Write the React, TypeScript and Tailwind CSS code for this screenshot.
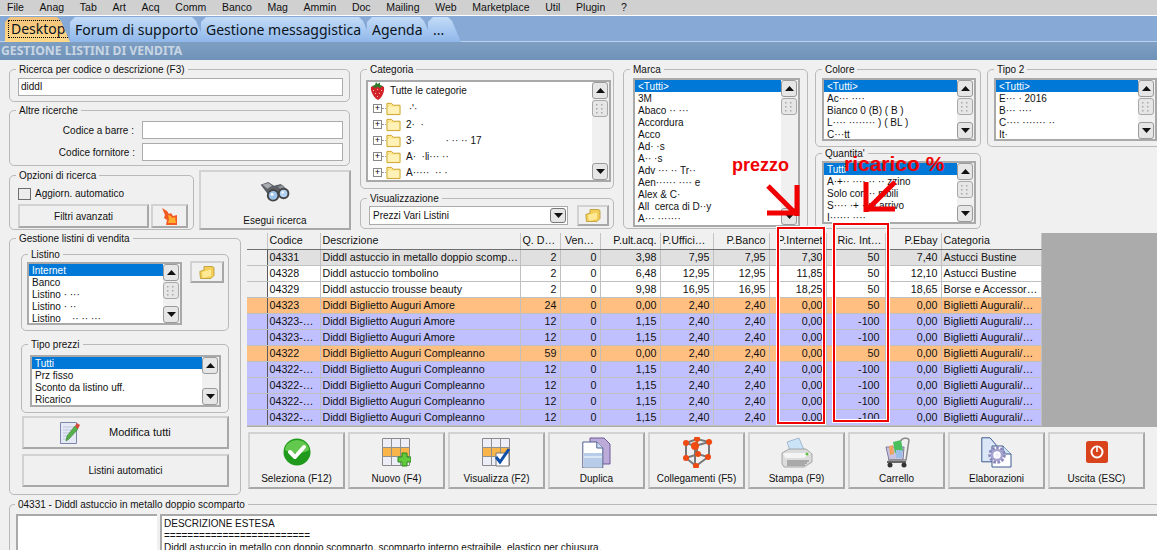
import type { ReactNode } from 'react'

const menuItems = ['File', 'Anag', 'Tab', 'Art', 'Acq', 'Comm', 'Banco', 'Mag', 'Ammin', 'Doc', 'Mailing', 'Web', 'Marketplace', 'Util', 'Plugin', '?']

const columns = [
  { label: '', className: 'w-[20px]' },
  { label: 'Codice', className: 'w-[53px] text-left' },
  { label: 'Descrizione', className: 'w-[200px] text-left' },
  { label: 'Q. D…', className: 'w-[40px] text-left' },
  { label: 'Ven…', className: 'w-[40px] text-center' },
  { label: 'P.ult.acq.', className: 'w-[60px] text-right' },
  { label: 'P.Uffici…', className: 'w-[53px] text-left' },
  { label: 'P.Banco', className: 'w-[56px] text-right' },
  { label: 'P.Internet', className: 'w-[57px] text-right' },
  { label: 'Ric. Int…', className: 'w-[59px] text-right' },
  { label: 'P.Ebay', className: 'w-[56px] text-right' },
  { label: 'Categoria', className: 'w-[100px] text-left' },
]

const rowColors = {
  sel: 'bg-[#e0e0e0]',
  white: 'bg-white',
  orange: 'bg-[#ffbf80]',
  blue: 'bg-[#c0c0ff]',
}

type RowColor = keyof typeof rowColors

const rows: [RowColor, string, string, string, string, string, string, string, string, string, string, string][] = [
  ['sel', '04331', 'Diddl astuccio in metallo doppio scomp…', '2', '0', '3,98', '7,95', '7,95', '7,30', '50', '7,40', 'Astucci Bustine'],
  ['white', '04328', 'Diddl astuccio tombolino', '2', '0', '6,48', '12,95', '12,95', '11,85', '50', '12,10', 'Astucci Bustine'],
  ['white', '04329', 'Diddl astuccio trousse beauty', '2', '0', '9,98', '16,95', '16,95', '18,25', '50', '18,65', 'Borse e Accessor…'],
  ['orange', '04323', 'Diddl Biglietto Auguri Amore', '24', '0', '0,00', '2,40', '2,40', '0,00', '50', '0,00', 'Biglietti Augurali/…'],
  ['blue', '04323-…', 'Diddl Biglietto Auguri Amore', '12', '0', '1,15', '2,40', '2,40', '0,00', '-100', '0,00', 'Biglietti Augurali/…'],
  ['blue', '04323-…', 'Diddl Biglietto Auguri Amore', '12', '0', '1,15', '2,40', '2,40', '0,00', '-100', '0,00', 'Biglietti Augurali/…'],
  ['orange', '04322', 'Diddl Biglietto Auguri Compleanno', '59', '0', '0,00', '2,40', '2,40', '0,00', '50', '0,00', 'Biglietti Augurali/…'],
  ['blue', '04322-…', 'Diddl Biglietto Auguri Compleanno', '12', '0', '1,15', '2,40', '2,40', '0,00', '-100', '0,00', 'Biglietti Augurali/…'],
  ['blue', '04322-…', 'Diddl Biglietto Auguri Compleanno', '12', '0', '1,15', '2,40', '2,40', '0,00', '-100', '0,00', 'Biglietti Augurali/…'],
  ['blue', '04322-…', 'Diddl Biglietto Auguri Compleanno', '12', '0', '1,15', '2,40', '2,40', '0,00', '-100', '0,00', 'Biglietti Augurali/…'],
  ['blue', '04322-…', 'Diddl Biglietto Auguri Compleanno', '12', '0', '1,15', '2,40', '2,40', '0,00', '-100', '0,00', 'Biglietti Augurali/…'],
]

function Group({ label, className, children }: { label: string; className: string; children?: ReactNode }) {
  return (
    <div className={`relative shrink-0 rounded-[5px] border border-[#b9b9b9] ${className}`}>
      <span className="absolute left-[6px] top-[-7px] whitespace-nowrap bg-[#f0f0f0] px-[3px] leading-[13px] text-[#111]">{label}</span>
      {children}
    </div>
  )
}

function RaisedButton({ className, children }: { className: string; children?: ReactNode }) {
  return (
    <div className={`shrink-0 border-2 border-[#d2d2d2] border-r-[#a8a8a8] border-b-[#a8a8a8] bg-[#f0f0f0] ${className}`}>
      {children}
    </div>
  )
}

function ScrollButton({ down }: { down?: boolean }) {
  return (
    <div className="flex h-[17px] w-[16px] shrink-0 items-center justify-center rounded-[3px] border border-[#9a9a9a] bg-[#e6e6e6]">
      <svg width="9" height="5" viewBox="0 0 9 5">
        <path d={down ? 'M0 0h9L4.500 5z' : 'M0 5h9L4.500 0z'} fill="#111" />
      </svg>
    </div>
  )
}

function Thumb() {
  return (
    <div className="mt-px flex h-[17px] w-[16px] items-center justify-center rounded-[3px] border border-[#a8a8a8] bg-[#e6e6e6]">
      <svg width="8" height="11" viewBox="0 0 8 11" fill="#a9a9a9">
        <rect x="0" y="1" width="1.500" height="1.500" />
        <rect x="5" y="1" width="1.500" height="1.500" />
        <rect x="0" y="5" width="1.500" height="1.500" />
        <rect x="5" y="5" width="1.500" height="1.500" />
        <rect x="0" y="9" width="1.500" height="1.500" />
        <rect x="5" y="9" width="1.500" height="1.500" />
      </svg>
    </div>
  )
}

function ScrollBar({ thumb = true }: { thumb?: boolean }) {
  return (
    <div className="flex w-[17px] shrink-0 flex-col bg-[#f0f0f0]">
      <ScrollButton />
      {thumb && <Thumb />}
      <div className="flex-1" />
      <ScrollButton down />
    </div>
  )
}

function ListBox({ items, className, thumb }: { items: string[]; className: string; thumb?: boolean }) {
  return (
    <div className={`flex overflow-hidden border-2 border-[#a9a9a9] bg-white ${className}`}>
      <div className="min-w-0 flex-1 overflow-hidden">
        {items.map((item, i) => (
          <div
            key={i}
            className={`h-[12px] whitespace-pre px-[3px] leading-[13px] ${i === 0 ? 'bg-[#0078d7] text-white' : 'text-[#111]'}`}
          >
            {item}
          </div>
        ))}
      </div>
      <ScrollBar thumb={thumb} />
    </div>
  )
}

function FolderIcon({ size = 14 }: { size?: number }) {
  return (
    <svg width={size} height={size} viewBox="0 0 16 16" className="shrink-0">
      <path d="M1 2.500h5l1.500 2H15v10H1z" fill="#ffe68f" stroke="#c9a227" />
      <path d="M2 6h12v7.500H2z" fill="#fff1b8" />
    </svg>
  )
}

function OpenFolderIcon() {
  return (
    <svg width="16" height="15" viewBox="0 0 16 15">
      <path d="M5 1.500h8l2 1v8l-3 3H1.500L.8 6.500 5 5z" fill="#f3cf5a" stroke="#b8952b" strokeWidth=".8" />
      <path d="M3 7l9-2.500V11l-8 2z" fill="#ffe996" />
    </svg>
  )
}

function Strawberry() {
  return (
    <svg width="15" height="18" viewBox="0 0 15 18" className="shrink-0">
      <path d="M1 5c2-2 11-2 13 0 1 5-3 12-6 13C5 17 0 10 1 5z" fill="#d3232a" />
      <path d="M3 8l1 1M7 7l1 1M11 8l1 1M5 11l1 1M9 11l1 1M7 14l1 1" stroke="#f6b8a8" />
      <path d="M2 4l3-1 1-3 1.500 2L10 .500 10 3l3 1-3 2-2.500-1L5 6z" fill="#2f7a2c" />
    </svg>
  )
}

function Binoculars() {
  return (
    <svg width="32" height="24" viewBox="0 0 32 24">
      <path d="M1 4l8-3 6 4 7-2 8 7-2 3-8-1-4 2-8-1z" fill="#5d6066" />
      <path d="M3 4l6-2 4 3-5 3z" fill="#a9acb1" />
      <path d="M19 6l5-2 5 6-5 1z" fill="#8d9096" />
      <circle cx="14" cy="15" r="6.500" fill="#444" />
      <circle cx="14" cy="15" r="4.500" fill="#9cc4ea" />
      <circle cx="25" cy="13" r="6" fill="#444" />
      <circle cx="25" cy="13" r="4" fill="#b2d3f2" />
      <circle cx="13" cy="14" r="1.500" fill="#fff" />
      <circle cx="24" cy="12" r="1.200" fill="#fff" />
    </svg>
  )
}

function FlameArrow() {
  return (
    <svg width="17" height="17" viewBox="0 0 17 17">
      <path d="M1 0l5 3 2 3 2-1 2 3 4-1v10H5l1-5-3-2 1-3z" fill="#f25a24" />
      <path d="M7 7l3 1 1 2 3-1 1 6H7l1-4z" fill="#ffae2e" />
    </svg>
  )
}

function Notepad() {
  return (
    <svg width="22" height="26" viewBox="0 0 22 26">
      <path d="M.500 2.500h16v21H.500z" fill="#e4e9f5" stroke="#7c88a8" />
      <path d="M3 7h11M3 10h11M3 13h7M3 16h5M3 19h6" stroke="#b9c3da" />
      <path d="M6 21l1-5L15 6l3 3-9 10z" fill="#58b04a" stroke="#2f7a2c" strokeWidth=".6" />
      <path d="M15 6l2-3 3 2-2 4z" fill="#d84a3a" />
    </svg>
  )
}

function CheckIcon() {
  return (
    <svg width="28" height="28" viewBox="0 0 28 28">
      <circle cx="14" cy="14" r="13.500" fill="#1f9a1c" />
      <path d="M2 12a12 10 0 0 1 24 0c-5 4-18 4-24 0z" fill="#63c94e" />
      <path d="M7 14l5 5 9-10" fill="none" stroke="#fff" strokeWidth="4" strokeLinecap="round" strokeLinejoin="round" />
    </svg>
  )
}

function GridBase() {
  return (
    <>
      <path d="M.500.500h27v27H.500z" fill="#eceef8" stroke="#8a8a8a" />
      <path d="M1 10h26v9H1z" fill="#f9b54a" />
      <path d="M9.500 0v28M18.500 0v28M0 9.500h28M0 18.500h28" stroke="#8f8f8f" />
    </>
  )
}

function GridPlus() {
  return (
    <svg width="29" height="29" viewBox="0 0 29 29">
      <GridBase />
      <path d="M20 15h5v4h4v5h-4v4h-5v-4h-4v-5h4z" fill="#62c83c" stroke="#2b8a1c" />
    </svg>
  )
}

function GridCheck() {
  return (
    <svg width="29" height="29" viewBox="0 0 29 29">
      <GridBase />
      <path d="M14 15h13v13H14z" fill="#fff" stroke="#777" />
      <path d="M14 19l4 5 9-13" fill="none" stroke="#0f4fa8" strokeWidth="3" />
    </svg>
  )
}

function DuplicateIcon() {
  return (
    <svg width="29" height="31" viewBox="0 0 29 31">
      <path d="M8 1h14l6 6v20H8z" fill="#bcaad8" stroke="#6c5a9a" />
      <path d="M.800 5h14l6 6v20H.800z" fill="#fff" stroke="#50608f" />
      <path d="M14.800 5v6h6" fill="#cfdff2" stroke="#50608f" />
      <path d="M2 16h18v14H2z" fill="#b6cce8" />
      <path d="M2 20h18" stroke="#fff" />
    </svg>
  )
}

function MoleculeIcon() {
  const nodes = [[5, 6], [16, 2], [28, 5], [14, 9], [5, 21], [17, 17], [27, 20], [15, 29]]
  return (
    <svg width="32" height="31" viewBox="0 0 32 31">
      <path d="M5 6L16 2 28 5 14 9zM5 6V21M14 9V29M28 5V20M5 21l10 8 12-9M16 2V17M5 21l12-4 10 3" fill="none" stroke="#777" strokeWidth="2" />
      {nodes.map(([x, y]) => (
        <circle key={`${x}-${y}`} cx={x} cy={y} r={x === 14 && y === 9 ? 4 : 3} fill="#ee4a12" />
      ))}
    </svg>
  )
}

function PrinterIcon() {
  return (
    <svg width="32" height="31" viewBox="0 0 32 31">
      <path d="M6 5l12-4 5 12-13 3z" fill="#cbe3f7" stroke="#8aa5bd" strokeWidth=".7" />
      <path d="M1 16l7-4h17l6 5v8l-8 5H3l-2-3z" fill="#dcdcdc" stroke="#8a8a8a" strokeWidth=".7" />
      <path d="M2 16h28l-7 5H4z" fill="#f4f4f4" />
      <path d="M6 24h22M6 26h20M6 28h18" stroke="#777" />
      <circle cx="26" cy="17" r="1.500" fill="#5fbf45" />
    </svg>
  )
}

function CartIcon() {
  return (
    <svg width="26" height="31" viewBox="0 0 26 31">
      <path d="M2 10h18l-1 13H5z" fill="#c9c2e0" stroke="#7d7aa0" />
      <path d="M5 9l4-1 1 9-4 1z" fill="#f0a260" />
      <path d="M9 5l8-2 2 11-8 2z" fill="#49bf5f" />
      <path d="M12 13h6v8h-6z" fill="#9ac0ea" />
      <path d="M17 4c0-3 7-4 8-1l-3 20H4" fill="none" stroke="#888" strokeWidth="1.500" />
      <path d="M3 25h19" stroke="#666" strokeWidth="2" />
      <circle cx="6" cy="28" r="2.500" fill="#333" />
      <circle cx="20" cy="28" r="2.500" fill="#333" />
    </svg>
  )
}

function GearDocIcon() {
  return (
    <svg width="31" height="31" viewBox="0 0 31 31">
      <path d="M.800.800H9l6 7v17H.800z" fill="#dbe7f7" stroke="#3d5a8c" />
      <path d="M11 9h11l8 8v13H11z" fill="#fff" stroke="#3d5a8c" />
      <path d="M22 9v8h8" fill="#cfdff2" stroke="#3d5a8c" />
      <circle cx="16" cy="18" r="7" fill="none" stroke="#8b87bd" strokeWidth="3.500" strokeDasharray="2.500 1.500" />
      <circle cx="16" cy="18" r="5" fill="none" stroke="#a5a2cf" strokeWidth="2.500" />
      <circle cx="16" cy="18" r="2" fill="#eef" />
    </svg>
  )
}

function PowerIcon() {
  return (
    <svg width="22" height="22" viewBox="0 0 22 22">
      <rect width="22" height="22" rx="2.500" fill="#d8431c" />
      <circle cx="11" cy="11" r="5.500" fill="none" stroke="#fff" strokeWidth="2" />
      <path d="M11 6.500V11" stroke="#d8431c" strokeWidth="3.500" />
      <path d="M11 5.500V11" stroke="#fff" strokeWidth="1.600" />
    </svg>
  )
}

const tools: { label: string; icon: ReactNode }[] = [
  { label: 'Seleziona (F12)', icon: <CheckIcon /> },
  { label: 'Nuovo (F4)', icon: <GridPlus /> },
  { label: 'Visualizza (F2)', icon: <GridCheck /> },
  { label: 'Duplica', icon: <DuplicateIcon /> },
  { label: 'Collegamenti (F5)', icon: <MoleculeIcon /> },
  { label: 'Stampa (F9)', icon: <PrinterIcon /> },
  { label: 'Carrello', icon: <CartIcon /> },
  { label: 'Elaborazioni', icon: <GearDocIcon /> },
  { label: 'Uscita (ESC)', icon: <PowerIcon /> },
]

function TreeRow({ label }: { label: string }) {
  return (
    <div className="flex h-[16px] items-center whitespace-pre pl-[5px]">
      <span className="flex h-[9px] w-[9px] shrink-0 items-center justify-center border border-[#888] bg-white text-[9px] leading-none text-black">+</span>
      <span className="w-[4px] shrink-0 border-t border-dotted border-[#999]" />
      <FolderIcon size={15} />
      <span className="ml-[5px]">{label}</span>
    </div>
  )
}

function Tab({ label, className, active }: { label: string; className: string; active?: boolean }) {
  return (
    <div
      className={`flex h-[25px] items-end pb-[4px] [clip-path:polygon(0_100%,0_5px,5px_0,calc(100%-13px)_0,calc(100%-9px)_4px,100%_100%)] ${className} ${
        active ? 'bg-gradient-to-b from-[#f2c27a] to-[#ffd98a]' : 'bg-gradient-to-b from-[#c3dbf7] to-[#8fb7ea]'
      }`}
    >
      <span className={`whitespace-nowrap leading-[16px] ${active ? 'border border-dotted border-black px-[2px]' : 'ml-[5px]'}`}>{label}</span>
    </div>
  )
}

export default function App() {
  return (
    <div className="relative h-[550px] w-[1157px] overflow-hidden bg-[#f0f0f0] text-[10px] text-[#111] [font-family:'Liberation_Sans',sans-serif]">
      <div className="flex h-[15px] items-center gap-[15.7px] bg-[#d0d0d0] pl-[7px] text-[10.5px]">
        {menuItems.map((m) => (
          <span key={m} className="whitespace-nowrap">{m}</span>
        ))}
      </div>
      <div className="h-px bg-white" />
      <div className="flex h-[26px] border-b border-[#b9d2ee] bg-[#87a9d6] pl-[5px] pt-px text-[14px] text-[#0b1420] [font-family:'Noto_Sans',sans-serif]">
        <Tab label="Desktop" active className="w-[65px] pl-[3px]" />
        <Tab label="Forum di supporto" className="w-[135px]" />
        <Tab label="Gestione messaggistica" className="-ml-[4px] w-[171px]" />
        <Tab label="Agenda" className="-ml-[5px] w-[66px]" />
        <Tab label="..." className="-ml-[5px] w-[33px]" />
      </div>
      <div className="h-[18px] bg-gradient-to-b from-[#7e9fc2] to-[#6f92b9] pl-px text-[12.2px] font-bold leading-[18px] text-[#c9d6e4] [font-family:'Noto_Sans',sans-serif]">GESTIONE LISTINI DI VENDITA</div>

      <div className="flex h-[173px] pl-[9px] pt-[9px]">
        <div className="flex w-[341px] shrink-0 flex-col">
          <Group label="Ricerca per codice o descrizione (F3)" className="h-[33px] w-full">
            <div className="ml-[8px] mt-[8px] h-[18px] w-[325px] border border-[#ababab] bg-white pl-[2px] leading-[16px]">diddl</div>
          </Group>
          <Group label="Altre ricerche" className="mt-[8px] h-[56px] w-full">
            <div className="mt-[10px] flex items-center justify-end pr-[6px]">
              <span>Codice a barre :</span>
              <div className="ml-[8px] h-[18px] w-[201px] border border-[#ababab] bg-white" />
            </div>
            <div className="mt-[4px] flex items-center justify-end pr-[6px]">
              <span>Codice fornitore :</span>
              <div className="ml-[7px] h-[18px] w-[201px] border border-[#ababab] bg-white" />
            </div>
          </Group>
          <div className="mt-[4px] flex items-start">
            <Group label="Opzioni di ricerca" className="mt-[5px] h-[55px] w-[185px]">
              <div className="ml-[8px] mt-[10px] flex items-center">
                <div className="h-[12px] w-[13px] border border-[#6d6d6d] bg-[#ececec]" />
                <span className="ml-[4px]">Aggiorn. automatico</span>
              </div>
              <div className="ml-[8px] mt-[3px] flex gap-[2px]">
                <RaisedButton className="flex h-[24px] w-[131px] items-center justify-center">Filtri avanzati</RaisedButton>
                <RaisedButton className="flex h-[24px] w-[37px] items-center justify-center"><FlameArrow /></RaisedButton>
              </div>
            </Group>
            <RaisedButton className="ml-[5px] flex h-[60px] w-[152px] flex-col items-center pt-[9px]">
              <Binoculars />
              <span className="mt-[9px]">Esegui ricerca</span>
            </RaisedButton>
          </div>
        </div>

        <div className="ml-[10px] flex w-[254px] shrink-0 flex-col">
          <Group label="Categoria" className="h-[120px] w-full">
            <div className="ml-[5px] mt-[10px] flex h-[102px] w-[245px] border-2 border-[#a9a9a9] bg-white">
              <div className="flex-1 overflow-hidden">
                <div className="flex h-[18px] items-center pl-[2px]">
                  <Strawberry />
                  <span className="mb-px ml-[5px]">Tutte le categorie</span>
                </div>
                <TreeRow label=" ·'·" />
                <TreeRow label="2·  ·" />
                <TreeRow label="3·           · ·· ·· 17" />
                <TreeRow label="A·  ·li··· ··" />
                <TreeRow label="A·····  ·· ·" />
                <TreeRow label="" />
              </div>
              <ScrollBar />
            </div>
          </Group>
          <Group label="Visualizzazione" className="mt-[9px] h-[31px] w-full">
            <div className="ml-[8px] mt-[6px] flex items-center">
              <div className="flex h-[19px] w-[199px] items-center justify-between border border-[#ababab] bg-white pl-[3px] pr-[1px]">
                Prezzi Vari Listini
                <div className="flex h-[15px] w-[16px] items-center justify-center rounded-[3px] border border-[#777] bg-[#e6e6e6]">
                  <svg width="9" height="5" viewBox="0 0 9 5"><path d="M0 0h9L4.500 5z" fill="#111" /></svg>
                </div>
              </div>
              <RaisedButton className="ml-[9px] flex h-[21px] w-[32px] items-center justify-center"><OpenFolderIcon /></RaisedButton>
            </div>
          </Group>
        </div>

        <Group label="Marca" className="ml-[9px] h-[160px] w-[185px]">
          <ListBox
            className="ml-[9px] mt-[8px] h-[149px] w-[167px]"
            items={['<Tutti>', '3M', 'Abaco ·· ···', 'Accordura', 'Acco', 'Ad· ·s', 'A·· ·s', 'Adv ··· ·· Tr··', 'Aen······ ···· e', 'Alex & C·', 'All  cerca di D··y', 'A··· ·······']}
          />
        </Group>

        <div className="ml-[7px] flex w-[166px] shrink-0 flex-col">
          <Group label="Colore" className="h-[78px] w-full">
            <ListBox className="ml-[6px] mt-[8px] h-[63px] w-[154px]" items={['<Tutti>', 'Ac··· ····', 'Bianco 0 (B) ( B )', 'L···· ········ ) ( BL )', 'C···tt']} />
          </Group>
          <Group label="Quantita'" className="mt-[6px] h-[76px] w-full">
            <ListBox className="ml-[6px] mt-[7px] h-[63px] w-[154px]" items={['Tutti', 'A·+·· ···· ·· ·· zzino', 'Solo con ·· nibili', 'S···· ·+ ·un arrivo', 'I······ ····']} />
          </Group>
        </div>

        <Group label="Tipo 2" className="ml-[6px] h-[78px] w-[175px]">
          <ListBox className="ml-[6px] mt-[8px] h-[63px] w-[163px]" items={['<Tutti>', 'E··· · 2016', 'B··· ····', 'C···· ······· ··', 'It·']} />
        </Group>
      </div>

      <div className="flex h-[262px] pl-[9px]">
        <Group label="Gestione listini di vendita" className="mt-[5px] h-[257px] w-[232px]">
          <Group label="Listino" className="ml-[11px] mt-[15px] h-[77px] w-[208px]">
            <div className="flex items-start">
              <ListBox className="ml-[5px] mt-[7px] h-[63px] w-[155px]" items={['Internet', 'Banco', 'Listino · ···', 'Listino · ··', 'Listino    ·· ·· ···']} />
              <RaisedButton className="ml-[8px] mt-[6px] flex h-[22px] w-[34px] items-center justify-center"><OpenFolderIcon /></RaisedButton>
            </div>
          </Group>
          <Group label="Tipo prezzi" className="ml-[11px] mt-[13px] h-[69px] w-[208px]">
            <ListBox className="ml-[8px] mt-[10px] h-[52px] w-[191px]" thumb={false} items={['Tutti', 'Prz fisso', 'Sconto da listino uff.', 'Ricarico']} />
          </Group>
          <RaisedButton className="ml-[12px] mt-[3px] flex h-[33px] w-[207px] items-center pl-[36px] text-[11px]">
            <Notepad />
            <span className="ml-[27px]">Modifica tutti</span>
          </RaisedButton>
          <RaisedButton className="ml-[12px] mt-[5px] flex h-[33px] w-[207px] items-center justify-center">Listini automatici</RaisedButton>
        </Group>

        <div className="ml-[6px] w-[910px] shrink-0">
          <div className="h-[194px] overflow-hidden bg-[#ababab] text-[10.7px]">
            <table className="w-[794px] table-fixed border-collapse">
              <thead>
                <tr className="h-[16px]">
                  {columns.map((c, i) => (
                    <th key={i} className={`h-[16px] overflow-hidden whitespace-nowrap border-r border-b border-r-[#c4c4c4] border-b-[#6f6f6f] bg-[#f0f0f0] py-0 pl-[2px] pr-[3px] font-normal leading-[15px] ${c.className} ${i === 0 ? 'border-r-[#5a5a5a]' : ''}`}>
                      {c.label}
                    </th>
                  ))}
                </tr>
              </thead>
              <tbody>
                {rows.map(([color, ...cells], r) => (
                  <tr key={r} className={`h-[16px] ${rowColors[color]}`}>
                    <td className={`h-[16px] border-r border-b border-r-[#5a5a5a] border-b-[#c0c0c0] p-0 ${color === 'white' || color === 'sel' ? 'bg-[#f0f0f0]' : ''}`} />
                    {cells.map((cell, i) => (
                      <td
                        key={i}
                        className={`h-[16px] overflow-hidden whitespace-nowrap border-r border-b border-[#c0c0c0] py-0 pl-[2px] pr-[3px] leading-[15px] ${i < 2 || i === 10 ? 'text-left' : 'text-right'}`}
                      >
                        {i === 8 ? <span className="pr-[2px]">{cell}</span> : cell}
                      </td>
                    ))}
                  </tr>
                ))}
              </tbody>
            </table>
          </div>
          <div className="mt-[5px] flex gap-[3px] pl-px">
            {tools.map((t) => (
              <RaisedButton key={t.label} className="flex h-[57px] w-[97px] flex-col items-center">
                <div className="flex h-[36px] items-center">{t.icon}</div>
                <span className="mt-[3px] whitespace-nowrap leading-[12px]">{t.label}</span>
              </RaisedButton>
            ))}
          </div>
        </div>
      </div>

      <div className="relative ml-[9px] mt-[9px] h-[60px] rounded-tl-[5px] border-l border-t border-[#b9b9b9] pl-[6px] pt-[9px]">
        <span className="absolute left-[5px] top-[-7px] whitespace-nowrap bg-[#f0f0f0] px-[3px] leading-[13px]">04331 - Diddl astuccio in metallo doppio scomparto</span>
        <div className="flex">
          <div className="h-[40px] w-[141px] shrink-0 border-l-2 border-t-2 border-[#a9a9a9] bg-white" />
          <div className="ml-[3px] h-[40px] flex-1 border-l-2 border-t-2 border-[#a9a9a9] bg-white pl-[2px] pt-[2px] leading-[12px]">
            <div>DESCRIZIONE ESTESA</div>
            <div>=========================</div>
            <div>Diddl astuccio in metallo con doppio scomparto, scomparto interno estraibile, elastico per chiusura.</div>
          </div>
        </div>
      </div>

      {/* annotazioni rosse sopra lo screenshot */}
      <div className="absolute left-[777px] top-[227px] h-[197px] w-[48px] border-2 border-[#f00000] shadow-[inset_0_0_0_1px_white] outline outline-1 outline-white" />
      <div className="absolute left-[833px] top-[223px] h-[199px] w-[56px] border-2 border-[#f00000] shadow-[inset_0_0_0_1px_white] outline outline-1 outline-white" />
      <span className="absolute left-[732px] top-[155px] text-[18px] font-bold leading-[20px] text-[#f00000]">prezzo</span>
      <span className="absolute left-[844px] top-[152px] text-[21px] font-bold leading-[24px] text-[#f00000]">ricarico %</span>
      <svg className="absolute left-[760px] top-[180px]" width="140" height="42" viewBox="760 180 140 42">
        <path d="M768 186L796 214M797 185V216M767 213H799" fill="none" stroke="#f00000" strokeWidth="5" />
        <path d="M895 182L867 210M866 182V212M864 209H895" fill="none" stroke="#f00000" strokeWidth="5" />
      </svg>
    </div>
  )
}
